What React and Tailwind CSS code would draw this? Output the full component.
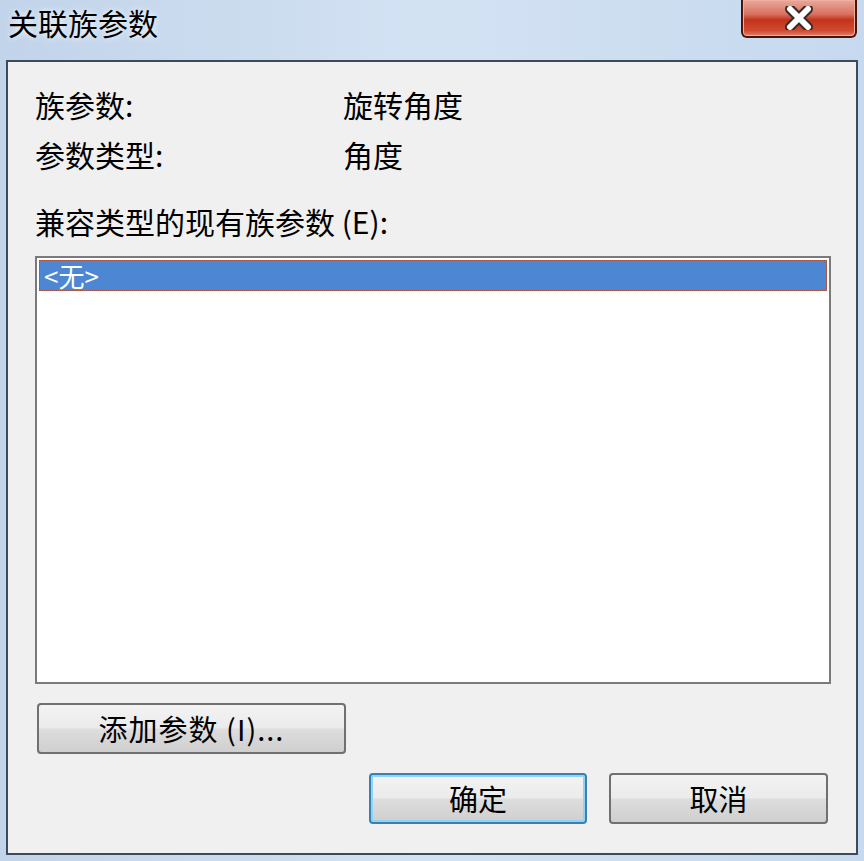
const font = { fontFamily: '"Noto Sans CJK SC", "Noto Sans", sans-serif' };

const WinButton = ({ children, focused, className = '' }) => (
  <div
    className={`flex items-center justify-center rounded-[4px] border-2 ${
      focused ? 'border-[#3c7fb1] shadow-[inset_0_0_0_2px_#8fd3f5]' : 'border-[#707070]'
    } bg-[linear-gradient(#f3f3f3_0%,#ebebeb_48%,#dddddd_52%,#cfcfcf_100%)] text-[29px] text-black ${className}`}
  >
    {children}
  </div>
);

export default function App() {
  return (
    <div
      className="flex h-[861px] w-[864px] flex-col bg-[linear-gradient(90deg,#c2d4ea,#d3e2f3_50%,#c6d9ee)]"
      style={font}
    >
      {/* title bar */}
      <div className="flex h-[60px] shrink-0 items-start justify-between">
        <div className="pl-[8px] pt-[3px] text-[30px] leading-[38px] text-black [text-shadow:0_0_6px_#ffffff]">
          关联族参数
        </div>
        <div className="mr-[7px] flex h-[38px] w-[116px] items-center justify-center rounded-b-[6px] border-2 border-t-0 border-[#4a1208] bg-[linear-gradient(#e9a99c_0%,#d8705e_40%,#c2331c_55%,#d04a30_85%,#e0806a_100%)] shadow-[inset_0_0_0_1px_#f0b0a0]">
          <svg width="34" height="24" viewBox="0 0 34 24">
            <path d="M8 3 L26 21 M26 3 L8 21" stroke="#3a2a2a" strokeWidth="10" strokeLinecap="round" />
            <path d="M8 3 L26 21 M26 3 L8 21" stroke="#ffffff" strokeWidth="6" strokeLinecap="round" />
          </svg>
        </div>
      </div>

      {/* client area */}
      <div className="mx-[6px] mb-[6px] flex flex-1 flex-col border-2 border-[#3d4a5c] bg-[#f0f0f0] pl-[27px] pr-[25px] pt-[17px]">
        <div className="flex h-[50px] items-center text-[30px] text-black">
          <span className="w-[308px]">族参数:</span>
          <span>旋转角度</span>
        </div>
        <div className="flex h-[50px] items-center text-[30px] text-black">
          <span className="w-[308px]">参数类型:</span>
          <span>角度</span>
        </div>
        <div className="mt-[17px] flex h-[50px] items-center text-[30px] text-black">
          兼容类型的现有族参数 (E):
        </div>

        <div className="mt-[10px] h-[428px] border-2 border-[#7a7a7a] bg-white p-[2px]">
          <div className="flex h-[31px] items-center border border-dotted border-[#a05040] bg-[#4d86d3] pl-[4px] text-[26px] leading-none text-white">
            &lt;无&gt;
          </div>
        </div>

        <WinButton className="ml-[2px] mt-[19px] h-[51px] w-[309px] tracking-[1px]">添加参数 (I)...</WinButton>

        <div className="mt-[19px] flex justify-end gap-[22px] pr-[3px]">
          <WinButton focused className="h-[51px] w-[218px]">确定</WinButton>
          <WinButton className="h-[51px] w-[219px]">取消</WinButton>
        </div>
      </div>
    </div>
  );
}
